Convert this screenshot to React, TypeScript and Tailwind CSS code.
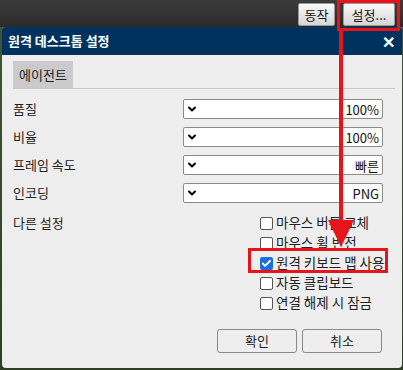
import { ChevronDown, Check } from "lucide-react"

const font = { fontFamily: '"Noto Sans CJK KR", "Noto Sans", sans-serif' }

function TopButton({ label, w }: { label: string; w: string }) {
  return (
    <button
      className={`${w} h-[23px] rounded-[2px] border border-[#9a9a9a] bg-gradient-to-b from-[#fafafa] to-[#d6d6d6] text-[13px] leading-none text-[#111]`}
    >
      {label}
    </button>
  )
}

function SelectRow({ label, value }: { label: string; value: string }) {
  return (
    <div className="flex items-center h-[28px]">
      <div className="w-[170px] text-[13px] text-[#222]">{label}</div>
      <div className="w-[200px] h-[20px] bg-white border border-[#8a8a8a] rounded-[2px] flex items-center justify-between pl-[2px] pr-[3px]">
        <ChevronDown className="w-[12px] h-[12px] text-black" strokeWidth={4} />
        <span className="text-[13px] text-[#111] leading-none">{value}</span>
      </div>
    </div>
  )
}

function Option({ label, checked }: { label: string; checked?: boolean }) {
  return (
    <div className="flex items-center h-[20px] gap-[3px]">
      {checked ? (
        <span className="w-[13px] h-[13px] rounded-[2px] bg-[#1a6fe0] flex items-center justify-center">
          <Check className="w-[11px] h-[11px] text-white" strokeWidth={4} />
        </span>
      ) : (
        <span className="w-[13px] h-[13px] rounded-[2px] border border-[#555] bg-white" />
      )}
      <span className="text-[13.5px] text-[#222] leading-none">{label}</span>
    </div>
  )
}

export default function App() {
  return (
    <div
      className="relative w-[403px] h-[370px] overflow-hidden bg-gradient-to-b from-[#44553a] to-[#2f3f26]"
      style={font}
    >
      <div className="h-[27px] bg-gradient-to-b from-[#3c3c3c] to-[#2a2a2a] flex justify-end items-start pt-[3px] pr-[8px] gap-[8px]">
        <TopButton label="동작" w="w-[37px]" />
        <TopButton label="설정..." w="w-[52px]" />
      </div>

      <div className="ml-[2px] w-[400px] h-[341px] bg-[#eeeeee] rounded-t-[3px] rounded-b-[4px] flex flex-col">
        <div className="h-[28px] bg-[#00325f] rounded-t-[3px] flex items-center justify-between pl-[6px] pr-[7px]">
          <span className="text-white font-bold text-[13px]">원격 데스크톱 설정</span>
          <span className="text-white font-bold text-[16px] leading-none">✕</span>
        </div>

        <div className="px-[11px] pt-[6px]">
          <div className="border-b border-[#c8c8c8] w-[382px]">
            <div className="w-[60px] h-[27px] bg-[#cbcbcb] flex items-center justify-center text-[13px] text-[#222]">
              에이전트
            </div>
          </div>

          <div className="pt-[6px]">
            <SelectRow label="품질" value="100%" />
            <SelectRow label="비율" value="100%" />
            <SelectRow label="프레임 속도" value="빠른" />
            <SelectRow label="인코딩" value="PNG" />
          </div>

          <div className="flex pt-[6px]">
            <div className="w-[247px] text-[13px] text-[#222] h-[20px] flex items-center">다른 설정</div>
            <div className="flex flex-col">
              <Option label="마우스 버튼 교체" />
              <Option label="마우스 휠 반전" />
              <Option label="원격 키보드 맵 사용" checked />
              <Option label="자동 클립보드" />
              <Option label="연결 해제 시 잠금" />
            </div>
          </div>

          <div className="flex justify-end gap-[5px] pr-[9px] pt-[16px]">
            <button className="w-[80px] h-[24px] rounded-[3px] border border-[#8a8a8a] bg-[#eeeeee] text-[13px] text-[#222]">
              확인
            </button>
            <button className="w-[80px] h-[24px] rounded-[3px] border border-[#8a8a8a] bg-[#eeeeee] text-[13px] text-[#222]">
              취소
            </button>
          </div>
        </div>
      </div>

      {/* red annotation overlays */}
      <div className="absolute left-[337px] top-0 w-[63px] h-[31px] border-[3px] border-[#e8141c]" />
      <div className="absolute left-[248px] top-[248px] w-[140px] h-[25px] border-[3px] border-[#e8141c]" />
      <div className="absolute left-[339px] top-[31px] w-[4px] h-[192px] bg-[#e8141c]" />
      <svg className="absolute left-[328px] top-[220px]" width="26" height="27" viewBox="0 0 26 27">
        <polygon points="0,0 26,0 13,27" fill="#e8141c" />
      </svg>
    </div>
  )
}
